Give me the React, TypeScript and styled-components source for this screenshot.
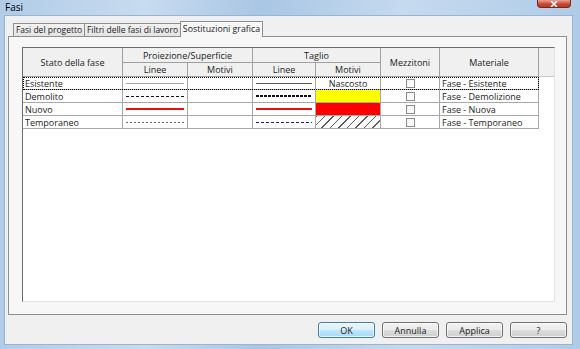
import * as React from "react";
import styled, { createGlobalStyle } from "styled-components";

const GlobalStyle = createGlobalStyle`
  html, body { margin: 0; padding: 0; }
  body {
    font-family: "Open Sans", "Noto Sans", sans-serif;
    font-size: 9px;
    color: #1b1b1b;
  }
`;

const Window = styled.div`
  width: 580px;
  height: 349px;
  display: flex;
  flex-direction: column;
  background: linear-gradient(90deg, #b1cce8 0%, #c8dbef 25%, #a9c6e5 45%, #c6daef 70%, #b0cbe8 100%);
`;

const TitleBar = styled.div`
  height: 15px;
  flex: none;
  display: flex;
  justify-content: space-between;
  align-items: flex-start;
  padding-left: 5px;
`;

const Title = styled.span`
  font-size: 10px;
  line-height: 15px;
  color: #000;
`;

const CloseButton = styled.div`
  width: 34px;
  height: 8px;
  margin-right: 9px;
  box-sizing: border-box;
  border: 1px solid #6f2a20;
  border-top: none;
  border-radius: 0 0 4px 4px;
  background: linear-gradient(#e9a291, #c7462e 60%, #b93a24);
  display: flex;
  justify-content: center;
  align-items: flex-end;
`;

const Client = styled.div`
  flex: 1;
  margin: 0 7px 4px 4px;
  border: 1px solid #9db3ca;
  background: #f0f0f0;
  display: flex;
  flex-direction: column;
  padding: 5px 5px 6px 3px;
`;

const TabStrip = styled.div`
  height: 16px;
  display: flex;
  align-items: flex-end;
  padding-left: 5px;
  position: relative;
  z-index: 1;
`;

const Tab = styled.div<{ $active?: boolean; $w: number }>`
  width: ${(p) => p.$w}px;
  height: ${(p) => (p.$active ? 16 : 14)}px;
  box-sizing: border-box;
  border: 1px solid #8c8e94;
  border-bottom: ${(p) => (p.$active ? "none" : "1px solid #8c8e94")};
  margin-right: -1px;
  background: ${(p) =>
    p.$active ? "#f7f7f7" : "linear-gradient(#f2f2f2, #e4e4e4)"};
  font-size: ${(p) => (p.$active ? 8.8 : 8.5)}px;
  line-height: ${(p) => (p.$active ? 14 : 12)}px;
  text-align: center;
  white-space: nowrap;
  overflow: hidden;
`;

const Panel = styled.div`
  height: 279px;
  box-sizing: border-box;
  margin-top: -1px;
  border: 1px solid #8c8e94;
  background: #f7f7f7;
  padding: 10px 11px 12px 13px;
  display: flex;
`;

const Grid = styled.div`
  flex: 1;
  display: grid;
  grid-template-columns: 100px 65px 65px 63px 65px 59px 99px 15px;
  grid-template-rows: 15px 14px 13px 13px 13px 13px 1fr;
  border: 1px solid;
  border-color: #6b6b6b #e2e2e2 #e2e2e2 #6b6b6b;
  background: #fff;
`;

const HeadCell = styled.div<{ $col: string; $row: string }>`
  grid-column: ${(p) => p.$col};
  grid-row: ${(p) => p.$row};
  background: #f0f0f0;
  border-right: 1px solid #a0a0a0;
  border-bottom: 1px solid #a0a0a0;
  display: flex;
  align-items: center;
  justify-content: center;
  white-space: nowrap;
`;

const Filler = styled.div`
  grid-column: 8;
  grid-row: 1 / 3;
  background: #f0f0f0;
  border-bottom: 1px solid #c8c8c8;
`;

const Cell = styled.div<{
  $row: number;
  $col: number;
  $align?: "left" | "center";
  $fill?: string;
  $hatch?: boolean;
}>`
  grid-row: ${(p) => p.$row};
  grid-column: ${(p) => p.$col};
  border-right: 1px solid #a8a8a8;
  border-bottom: 1px solid #a8a8a8;
  display: flex;
  align-items: center;
  justify-content: ${(p) => (p.$align === "center" ? "center" : "flex-start")};
  padding: 0 2px;
  white-space: nowrap;
  background: ${(p) =>
    p.$hatch
      ? "repeating-linear-gradient(135deg, #5a5a5a 0 1px, #fff 1px 6px)"
      : p.$fill || "#fff"};
  overflow: hidden;
`;

const FocusRing = styled.div`
  grid-column: 1 / 8;
  grid-row: 3;
  border: 1px dotted #000;
  pointer-events: none;
`;

const LineSample = styled.div<{ $color: string; $size: number; $dash?: number; $space?: number }>`
  flex: 1;
  height: ${(p) => p.$size}px;
  margin: 0 1px;
  background: ${(p) =>
    p.$dash
      ? `repeating-linear-gradient(90deg, ${p.$color} 0 ${p.$dash}px, transparent ${p.$dash}px ${p.$dash + (p.$space || 2)}px)`
      : p.$color};
`;

const CheckBox = styled.div`
  width: 9px;
  height: 9px;
  box-sizing: border-box;
  border: 1px solid #8a8a8a;
  background: linear-gradient(135deg, #f4f4f4, #fff);
`;

const ButtonRow = styled.div`
  margin-top: 7px;
  height: 16px;
  display: flex;
  justify-content: flex-end;
  gap: 7px;
`;

const Button = styled.div<{ $default?: boolean }>`
  width: 57px;
  box-sizing: border-box;
  border: 1px solid ${(p) => (p.$default ? "#3c7fb1" : "#707070")};
  border-radius: 3px;
  background: ${(p) =>
    p.$default
      ? "linear-gradient(#eaf6fd 0%, #d9f0fc 50%, #bee6fd 51%, #a7d9f5 100%)"
      : "linear-gradient(#f2f2f2 0%, #ebebeb 50%, #dddddd 51%, #cfcfcf 100%)"};
  box-shadow: inset 0 0 0 1px rgba(255, 255, 255, 0.7);
  display: flex;
  align-items: center;
  justify-content: center;
`;

type Line = { color: string; size: number; dash?: number; space?: number };

type Phase = {
  name: string;
  proj: Line;
  cut: Line;
  pattern: { text?: string; fill?: string; hatch?: boolean };
  material: string;
};

const phases: Phase[] = [
  {
    name: "Esistente",
    proj: { color: "#a6a6a6", size: 1 },
    cut: { color: "#555", size: 1 },
    pattern: { text: "Nascosto" },
    material: "Fase - Esistente",
  },
  {
    name: "Demolito",
    proj: { color: "#111", size: 1, dash: 3, space: 2 },
    cut: { color: "#111", size: 2, dash: 3, space: 1 },
    pattern: { fill: "#ffff00" },
    material: "Fase - Demolizione",
  },
  {
    name: "Nuovo",
    proj: { color: "#e81010", size: 2 },
    cut: { color: "#e81010", size: 2 },
    pattern: { fill: "#ff0000" },
    material: "Fase - Nuova",
  },
  {
    name: "Temporaneo",
    proj: { color: "#666", size: 1, dash: 2, space: 2 },
    cut: { color: "#1c1ca8", size: 1, dash: 3, space: 2 },
    pattern: { hatch: true },
    material: "Fase - Temporaneo",
  },
];

const Sample = ({ line }: { line: Line }) => (
  <LineSample $color={line.color} $size={line.size} $dash={line.dash} $space={line.space} />
);

export default function App() {
  return (
    <>
      <GlobalStyle />
      <Window>
        <TitleBar>
          <Title>Fasi</Title>
          <CloseButton>
            <svg width="8" height="6" viewBox="0 0 8 6">
              <path d="M1 0 L7 6 M7 0 L1 6" stroke="#fff" strokeWidth="1.6" />
            </svg>
          </CloseButton>
        </TitleBar>
        <Client>
          <TabStrip>
            <Tab $w={72}>Fasi del progetto</Tab>
            <Tab $w={97}>Filtri delle fasi di lavoro</Tab>
            <Tab $w={83} $active>Sostituzioni grafica</Tab>
          </TabStrip>
          <Panel>
            <Grid>
              <HeadCell $col="1" $row="1 / 3">Stato della fase</HeadCell>
              <HeadCell $col="2 / 4" $row="1">Proiezione/Superficie</HeadCell>
              <HeadCell $col="4 / 6" $row="1">Taglio</HeadCell>
              <HeadCell $col="6" $row="1 / 3">Mezzitoni</HeadCell>
              <HeadCell $col="7" $row="1 / 3">Materiale</HeadCell>
              <Filler />
              <HeadCell $col="2" $row="2">Linee</HeadCell>
              <HeadCell $col="3" $row="2">Motivi</HeadCell>
              <HeadCell $col="4" $row="2">Linee</HeadCell>
              <HeadCell $col="5" $row="2">Motivi</HeadCell>
              {phases.map((p, i) => {
                const row = i + 3;
                return (
                  <React.Fragment key={p.name}>
                    <Cell $row={row} $col={1}>{p.name}</Cell>
                    <Cell $row={row} $col={2}>
                      <Sample line={p.proj} />
                    </Cell>
                    <Cell $row={row} $col={3} />
                    <Cell $row={row} $col={4}>
                      <Sample line={p.cut} />
                    </Cell>
                    <Cell
                      $row={row}
                      $col={5}
                      $align="center"
                      $fill={p.pattern.fill}
                      $hatch={p.pattern.hatch}
                    >
                      {p.pattern.text}
                    </Cell>
                    <Cell $row={row} $col={6} $align="center">
                      <CheckBox />
                    </Cell>
                    <Cell $row={row} $col={7}>{p.material}</Cell>
                  </React.Fragment>
                );
              })}
              <FocusRing />
            </Grid>
          </Panel>
          <ButtonRow>
            <Button $default>OK</Button>
            <Button>Annulla</Button>
            <Button>Applica</Button>
            <Button>?</Button>
          </ButtonRow>
        </Client>
      </Window>
    </>
  );
}
